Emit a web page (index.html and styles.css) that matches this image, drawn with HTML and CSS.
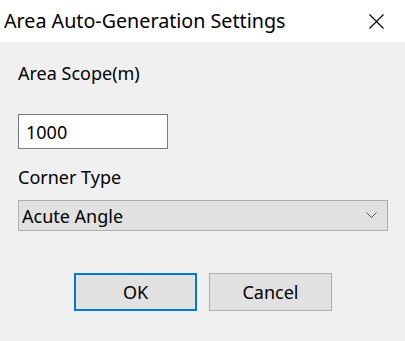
FILE: index.html
```html
<!DOCTYPE html>
<html lang="en">
<head>
  <meta charset="UTF-8">
  <meta name="viewport" content="width=device-width, initial-scale=1.0">
  <title>Area Auto-Generation Settings</title>
  <link rel="stylesheet" href="styles.css">
</head>

<body>
  <div class="dialog">
    <div class="titlebar">
      <span class="title">Area Auto-Generation Settings</span>
      <button class="close" type="button" aria-label="Close">
        <svg width="15" height="15" viewBox="0 0 15 15">
          <path d="M0.5 0.5 L14.5 14.5 M14.5 0.5 L0.5 14.5" stroke="#000" stroke-width="1.1" fill="none"/>
        </svg>
      </button>
    </div>

    <form class="content" id="area-settings">
      <label class="field" for="scope">
        <span class="caption">Area Scope(m)</span>
        <input class="textbox" type="text" id="scope" name="scope" value="1000" />
      </label>

      <div class="field">
        <span class="caption caption-combo">Corner Type</span>
        <div class="combo">
          <span>Acute Angle</span>
          <svg width="11" height="7" viewBox="0 0 11 7">
            <path d="M0.5 0.5 L5.5 5.5 L10.5 0.5" stroke="#555" stroke-width="1" fill="none"/>
          </svg>
        </div>
      </div>

      <div class="buttons">
        <button class="btn btn-default" type="submit">OK</button>
        <button class="btn" type="button">Cancel</button>
      </div>
    </form>
  </div>
</body>
</html>
```

FILE: styles.css
```css
body {
  margin: 0;
  background-color: #f0f0f0;
  font-family: "Noto Sans", "Open Sans", sans-serif;
  color: #000;
}
.dialog {
  width: 405px;
  height: 341px;
}
.titlebar {
  height: 42px;
  background-color: #fff;
  display: flex;
  align-items: center;
  justify-content: space-between;
  padding: 0 21px 0 4px;
  box-sizing: border-box;
}
.title {
  font-size: 19.7px;
  line-height: 42px;
}
.close {
  border: 0;
  background: none;
  padding: 0;
  width: 15px;
  height: 15px;
  display: flex;
}
.content {
  padding: 19px 17px 0 18px;
  display: block;
}
.field {
  display: block;
}
.caption {
  display: block;
  font-size: 18px;
  line-height: 24px;
  margin-bottom: 29px;
}
.caption-combo {
  margin-top: 16px;
  margin-bottom: 11px;
}
.textbox {
  display: block;
  box-sizing: border-box;
  width: 150px;
  height: 35px;
  border: 1px solid #7a7a7a;
  background-color: #fff;
  font-family: inherit;
  font-size: 18px;
  padding: 0 7px;
  margin: 0;
  outline: none;
}
.combo {
  box-sizing: border-box;
  height: 31px;
  border: 1px solid #adadad;
  background-color: #e1e1e1;
  display: flex;
  align-items: center;
  justify-content: space-between;
  padding: 0 10px 0 3px;
  font-size: 18px;
}
.buttons {
  display: flex;
  gap: 12px;
  margin: 42px 0 0 56px;
}
.btn {
  box-sizing: border-box;
  width: 123px;
  height: 38px;
  border: 1px solid #adadad;
  background-color: #e1e1e1;
  font-family: inherit;
  font-size: 18px;
  color: #000;
  padding: 0;
}
.btn-default {
  border: 2px solid #0078d7;
}
```
